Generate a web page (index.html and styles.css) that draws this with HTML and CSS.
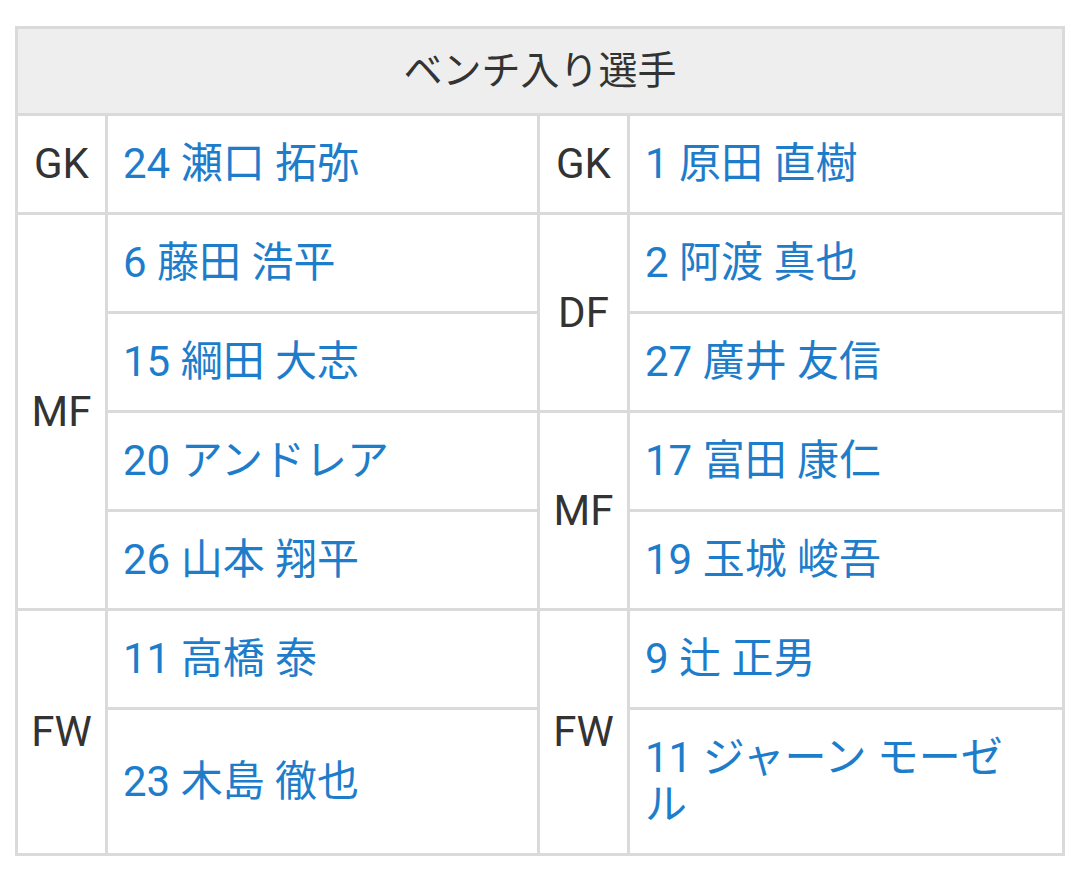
FILE: index.html
```html
<!DOCTYPE html>
<html lang="ja">
<head>
<meta charset="utf-8">
<link rel="stylesheet" href="styles.css">
</head>
<body>
<table class="bench">
  <colgroup>
    <col class="c-pos"><col class="c-name-l"><col class="c-pos"><col class="c-name-r">
  </colgroup>
  <thead>
    <tr><th colspan="4" class="head">ベンチ入り選手</th></tr>
  </thead>
  <tbody>
    <tr>
      <td class="pos">GK</td><td class="name">24 瀬口 拓弥</td>
      <td class="pos">GK</td><td class="name">1 原田 直樹</td>
    </tr>
    <tr>
      <td class="pos" rowspan="4">MF</td><td class="name">6 藤田 浩平</td>
      <td class="pos" rowspan="2">DF</td><td class="name">2 阿渡 真也</td>
    </tr>
    <tr>
      <td class="name">15 綱田 大志</td>
      <td class="name">27 廣井 友信</td>
    </tr>
    <tr>
      <td class="name">20 アンドレア</td>
      <td class="pos" rowspan="2">MF</td><td class="name">17 富田 康仁</td>
    </tr>
    <tr>
      <td class="name">26 山本 翔平</td>
      <td class="name">19 玉城 峻吾</td>
    </tr>
    <tr>
      <td class="pos" rowspan="2">FW</td><td class="name">11 高橋 泰</td>
      <td class="pos" rowspan="2">FW</td><td class="name">9 辻 正男</td>
    </tr>
    <tr>
      <td class="name">23 木島 徹也</td>
      <td class="name">11 ジャーン モーゼル</td>
    </tr>
  </tbody>
</table>
</body>
</html>
```

FILE: styles.css
```css
html, body {
  margin: 0;
  padding: 0;
  background: #ffffff;
}
body {
  padding: 26px 15px 0 15px;
  font-family: Roboto, "Noto Sans CJK JP", sans-serif;
  font-size: 42px;
  line-height: 47px;
  color: #333333;
}
.bench {
  border-collapse: collapse;
  width: 1050px;
  table-layout: fixed;
  border: 3px solid #dadada;
}
.c-pos { width: 90px; }
.c-name-l { width: 432px; }
.c-name-r { width: 435px; }
.bench th, .bench td {
  border: 3px solid #dadada;
  padding: 24px 20px 25px 15px;
  vertical-align: middle;
}
.bench .head {
  background: #eeeeee;
  font-weight: normal;
  font-size: 39px;
  line-height: 48px;
  text-align: center;
  padding: 18px 17px;
  color: #333333;
}
.bench .pos {
  text-align: center;
  padding-left: 0;
  padding-right: 0;
  color: #333333;
}
.name {
  text-align: left;
  color: #1e7dcb;
}
```
